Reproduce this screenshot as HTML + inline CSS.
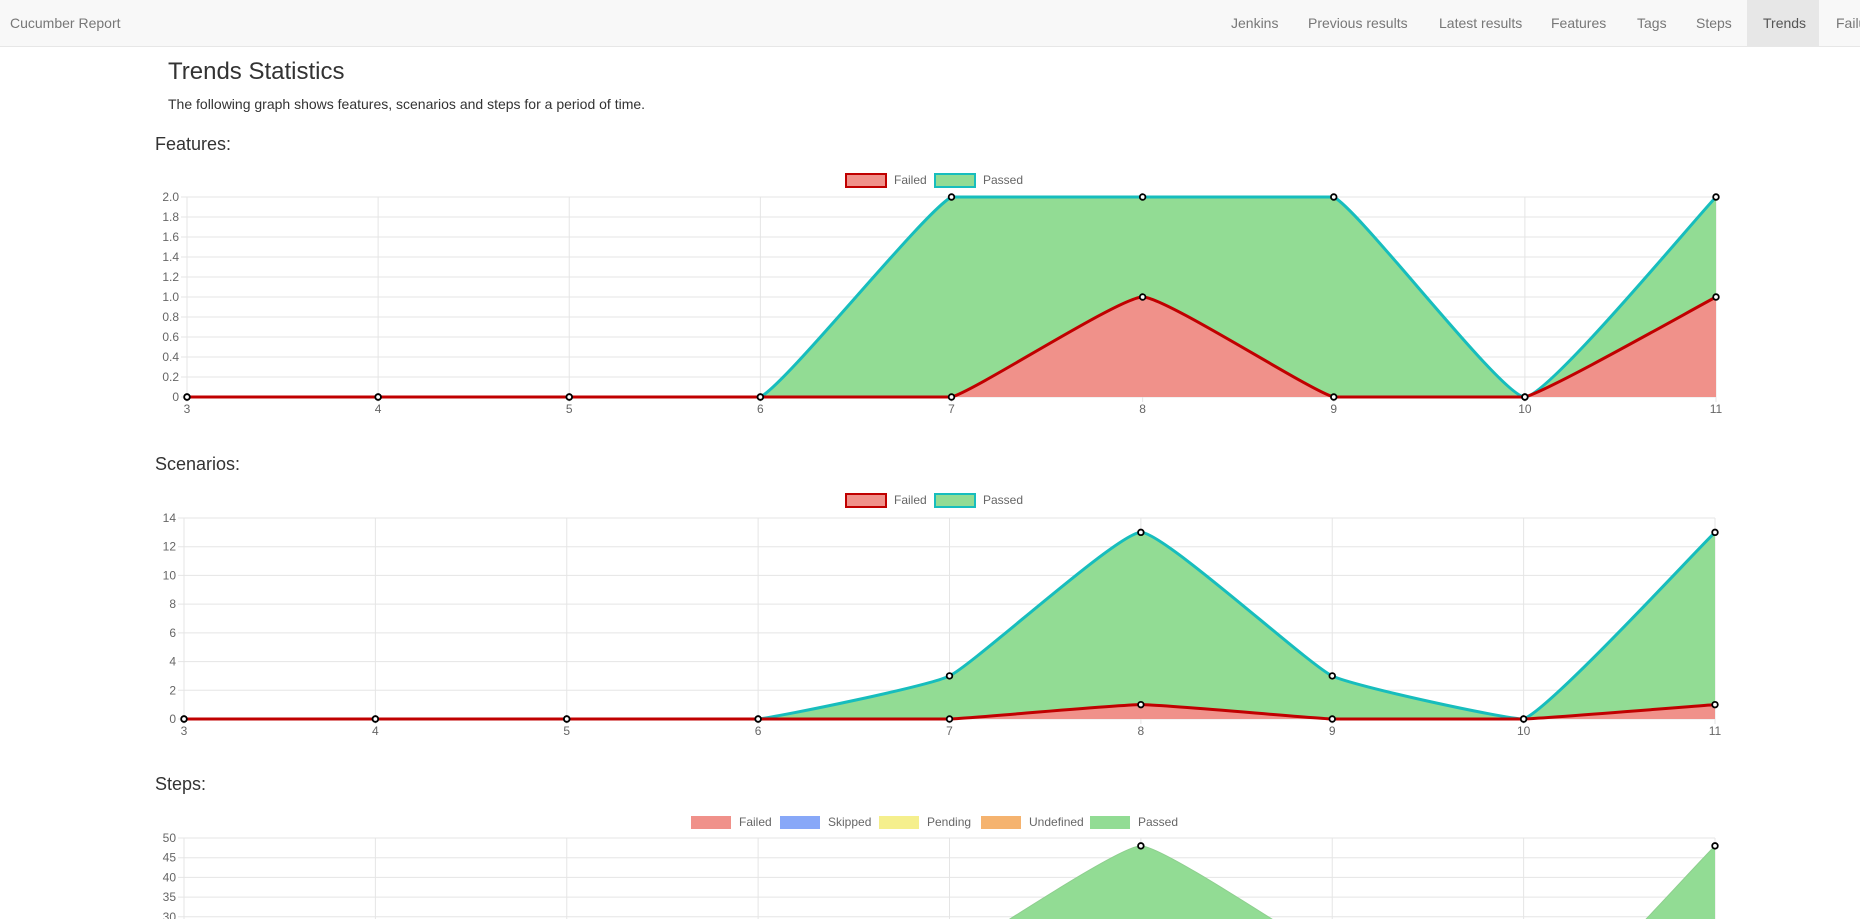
<!DOCTYPE html>
<html><head><meta charset="utf-8"><style>
*{margin:0;padding:0;box-sizing:border-box}
html,body{width:1860px;height:919px;overflow:hidden}
body{background:#fff;font-family:"Liberation Sans",Arial,sans-serif;color:#333;position:relative}
.nav{position:absolute;left:0;top:0;width:1860px;height:47px;background:#f8f8f8;border-bottom:1px solid #e7e7e7}
.nav span{position:absolute;top:0;line-height:46px;font-size:14px;color:#777;white-space:nowrap}
.act{background:#e7e7e7;color:#555!important;padding:0 16px}
h3{position:absolute;left:168px;top:58px;font-size:24px;font-weight:400;color:#333}
p{position:absolute;left:168px;top:96px;font-size:14px;color:#333}
h4{position:absolute;left:155px;font-size:18px;font-weight:400;color:#333}
svg{position:absolute;left:0;top:0;overflow:hidden}
</style></head><body>
<div class="nav">
<span style="left:10px">Cucumber Report</span>
<span style="left:1231px">Jenkins</span>
<span style="left:1308px">Previous results</span>
<span style="left:1439px">Latest results</span>
<span style="left:1551px">Features</span>
<span style="left:1637px">Tags</span>
<span style="left:1696px">Steps</span>
<span class="act" style="left:1747px;width:72px">Trends</span>
<span style="left:1836px">Failures</span>
</div>
<h3>Trends Statistics</h3>
<p>The following graph shows features, scenarios and steps for a period of time.</p>
<h4 style="top:134px">Features:</h4>
<h4 style="top:454px">Scenarios:</h4>
<h4 style="top:774px">Steps:</h4>
<svg id="s" width="1860" height="919" font-family="Liberation Sans, Arial, sans-serif" font-size="12"></svg>
<script>
var S=document.getElementById('s'),out='';
function spline(pts,top,bot){var t=0.12,cps=[];for(var i=0;i<pts.length;i++){var c=pts[i],p=pts[i-1]||c,n=pts[i+1]||c;var d01=Math.hypot(c[0]-p[0],c[1]-p[1]),d12=Math.hypot(n[0]-c[0],n[1]-c[1]);var s01=d01/(d01+d12)||0,s12=d12/(d01+d12)||0;var fa=t*s01,fb=t*s12;var a=[c[0]-fa*(n[0]-p[0]),c[1]-fa*(n[1]-p[1])],b=[c[0]+fb*(n[0]-p[0]),c[1]+fb*(n[1]-p[1])];a[1]=Math.min(bot,Math.max(top,a[1]));b[1]=Math.min(bot,Math.max(top,b[1]));cps.push([a,b]);}
var d='M'+pts[0][0]+','+pts[0][1];for(i=1;i<pts.length;i++){d+=' C'+cps[i-1][1][0]+','+cps[i-1][1][1]+' '+cps[i][0][0]+','+cps[i][0][1]+' '+pts[i][0]+','+pts[i][1];}return d;}
function chart(o){var x0=o.x0,x1=o.x1,top=o.top,bot=o.bot,n=9,dx=(x1-x0)/8;
for(var k=0;k<=o.ny;k++){var y=bot-(bot-top)*k/o.ny;if(y<919){out+='<line x1="'+(x0-6)+'" x2="'+x1+'" y1="'+y+'" y2="'+y+'" stroke="#e5e5e5"/>';out+='<text x="'+(x0-8)+'" y="'+(y+4)+'" text-anchor="end" fill="#666">'+o.lab(k)+'</text>';}}
for(var i=0;i<n;i++){var x=x0+dx*i;out+='<line x1="'+x+'" x2="'+x+'" y1="'+top+'" y2="'+(bot+5)+'" stroke="#e5e5e5"/>';if(bot<900)out+='<text x="'+x+'" y="'+(bot+16)+'" text-anchor="middle" fill="#666">'+(i+3)+'</text>';}
o.sets.forEach(function(s){var pts=s.v.map(function(v,i){return[x0+dx*i,bot-(bot-top)*v/o.max]});var d=spline(pts,top,bot);out+='<path d="'+d+' L'+x1+','+bot+' L'+x0+','+bot+'Z" fill="'+s.f+'"/>';if(s.l)out+='<path d="'+d+'" fill="none" stroke="'+s.l+'" stroke-width="3"/>';else out+='<path d="'+d+'" fill="none" stroke="#8ecf8f" stroke-width="1"/>';s.pts=pts;});
o.sets.forEach(function(s){s.pts.forEach(function(p){out+='<circle cx="'+p[0]+'" cy="'+p[1]+'" r="2.8" fill="#fff" stroke="#000" stroke-width="1.8"/>'})});
o.leg.forEach(function(g){out+='<rect x="'+g[0]+'" y="'+(o.ly-6)+'" width="40" height="13" fill="'+g[2]+'" stroke="'+g[3]+'" stroke-width="'+(g[3]=='none'?0:2)+'"/><text x="'+(g[0]+48)+'" y="'+(o.ly+4)+'" fill="#666">'+g[1]+'</text>'});}
var G='#92dc94',R='#f0918a',TL='#17bdbd',RL='#c00000';
chart({x0:187,x1:1716,top:197,bot:397,ny:10,max:2,lab:function(k){return k==0?'0':(k*0.2).toFixed(1)},ly:180,
sets:[{v:[0,0,0,0,2,2,2,0,2],f:G,l:TL},{v:[0,0,0,0,0,1,0,0,1],f:R,l:RL}],
leg:[[846,'Failed',R,RL],[935,'Passed',G,TL]]});
chart({x0:184,x1:1715,top:518,bot:719,ny:7,max:14,lab:function(k){return k*2},ly:500,
sets:[{v:[0,0,0,0,3,13,3,0,13],f:G,l:TL},{v:[0,0,0,0,0,1,0,0,1],f:R,l:RL}],
leg:[[846,'Failed',R,RL],[935,'Passed',G,TL]]});
chart({x0:184,x1:1715,top:838,bot:1035,ny:10,max:50,lab:function(k){return k*5},ly:822,
sets:[{v:[0,0,0,0,20,48,20,0,48],f:G}],
leg:[[691,'Failed','#f0918a','none'],[780,'Skipped','#88a8f8','none'],[879,'Pending','#f5ef8d','none'],[981,'Undefined','#f5b36f','none'],[1090,'Passed',G,'none']]});
S.innerHTML=out;
</script>
</body></html>
